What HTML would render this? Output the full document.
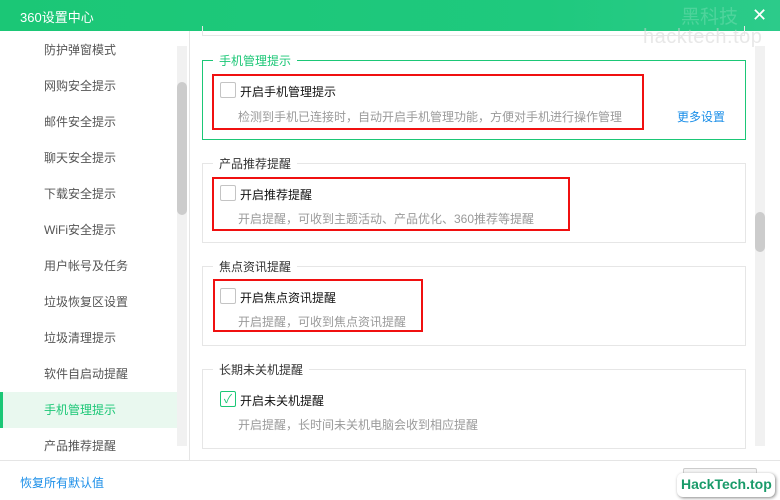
<!DOCTYPE html>
<html><head><meta charset="utf-8"><style>
*{margin:0;padding:0;box-sizing:border-box}
body{width:780px;height:500px;overflow:hidden;background:#fff;font-family:"Liberation Sans","Noto Sans CJK SC",sans-serif;font-size:12px;color:#333;position:relative}
.abs{position:absolute}
.title{left:0;top:0;width:780px;height:31px;background:linear-gradient(90deg,#1bc776,#1fc97e 70%,#2ccb8a)}
.title span{position:absolute;left:20px;top:7px;color:#fff;font-size:13px}
.nav{left:44px;font-size:12px;color:#555;line-height:16px}
.box{border:1px solid #e6e6e6}
.leg{background:#fff;padding:0 6px;font-size:12px;color:#333;line-height:14px}
.red{border:2px solid #f01010}
.cb{width:16px;height:16px;border:1px solid #c4c4c4;border-radius:2px;background:#fff}
.lbl{font-size:12px;color:#111}
.desc{font-size:12px;color:#9a9a9a}
</style></head><body>
<div class="abs title"><span>360设置中心</span>
<div class="abs" style="left:681px;top:2px;color:rgba(255,255,255,.18);font-size:19px">黑科技</div>
<div class="abs" style="left:752px;top:5px;color:#fff;font-size:18px">✕</div></div>
<div class="abs" style="left:643px;top:26px;color:rgba(210,210,210,.5);font-size:20px;letter-spacing:0.5px">hacktech.top</div>

<div class="abs nav" style="top:42px">防护弹窗模式</div>
<div class="abs nav" style="top:78px">网购安全提示</div>
<div class="abs nav" style="top:114px">邮件安全提示</div>
<div class="abs nav" style="top:150px">聊天安全提示</div>
<div class="abs nav" style="top:186px">下载安全提示</div>
<div class="abs nav" style="top:222px">WiFi安全提示</div>
<div class="abs nav" style="top:258px">用户帐号及任务</div>
<div class="abs nav" style="top:294px">垃圾恢复区设置</div>
<div class="abs nav" style="top:330px">垃圾清理提示</div>
<div class="abs nav" style="top:366px">软件自启动提醒</div>
<div class="abs" style="left:0;top:392px;width:177px;height:36px;background:#e9f8ef;border-left:3px solid #1bc776"></div>
<div class="abs nav" style="top:402px;color:#1bc776">手机管理提示</div>
<div class="abs nav" style="top:438px">产品推荐提醒</div>
<div class="abs" style="left:177px;top:46px;width:10px;height:400px;background:#f1f1f1"></div>
<div class="abs" style="left:177px;top:82px;width:10px;height:133px;background:#ccc;border-radius:5px"></div>
<div class="abs" style="left:189px;top:31px;width:1px;height:429px;background:#e5e5e5"></div>

<div class="abs box" style="left:202px;top:26px;width:543px;height:10px;border-top:none"></div>

<div class="abs" style="left:202px;top:60px;width:544px;height:80px;border:1px solid #1bc776"></div>
<div class="abs leg" style="left:213px;top:54px;color:#1bc776">手机管理提示</div>
<div class="abs red" style="left:212px;top:74px;width:432px;height:56px"></div>
<div class="abs cb" style="left:220px;top:82px"></div>
<div class="abs lbl" style="left:240px;top:83px">开启手机管理提示</div>
<div class="abs desc" style="left:238px;top:108px">检测到手机已连接时，自动开启手机管理功能，方便对手机进行操作管理</div>
<div class="abs" style="left:677px;top:108px;color:#1a8ee8">更多设置</div>

<div class="abs box" style="left:202px;top:163px;width:544px;height:80px"></div>
<div class="abs leg" style="left:213px;top:157px">产品推荐提醒</div>
<div class="abs red" style="left:212px;top:177px;width:358px;height:54px"></div>
<div class="abs cb" style="left:220px;top:185px"></div>
<div class="abs lbl" style="left:240px;top:186px">开启推荐提醒</div>
<div class="abs desc" style="left:238px;top:210px">开启提醒，可收到主题活动、产品优化、360推荐等提醒</div>

<div class="abs box" style="left:202px;top:266px;width:544px;height:80px"></div>
<div class="abs leg" style="left:213px;top:260px">焦点资讯提醒</div>
<div class="abs red" style="left:213px;top:279px;width:210px;height:53px"></div>
<div class="abs cb" style="left:220px;top:288px"></div>
<div class="abs lbl" style="left:240px;top:289px">开启焦点资讯提醒</div>
<div class="abs desc" style="left:238px;top:313px">开启提醒，可收到焦点资讯提醒</div>

<div class="abs box" style="left:202px;top:369px;width:544px;height:80px"></div>
<div class="abs leg" style="left:213px;top:363px">长期未关机提醒</div>
<div class="abs cb" style="left:220px;top:391px;border-color:#1bc776;color:#1bc776;font-size:12px;line-height:14px;text-align:center">✓</div>
<div class="abs lbl" style="left:240px;top:392px">开启未关机提醒</div>
<div class="abs desc" style="left:238px;top:416px">开启提醒，长时间未关机电脑会收到相应提醒</div>

<div class="abs" style="left:755px;top:46px;width:10px;height:400px;background:#f1f1f1"></div>
<div class="abs" style="left:755px;top:212px;width:10px;height:40px;background:#ccc;border-radius:5px"></div>

<div class="abs" style="left:0;top:460px;width:780px;height:1px;background:#e5e5e5"></div>
<div class="abs" style="left:20px;top:474px;color:#1a8ee8;font-size:12px">恢复所有默认值</div>
<div class="abs" style="left:683px;top:468px;width:74px;height:27px;border:1px solid #ccc;background:#f4f4f4;border-radius:2px"></div>
<div class="abs" style="left:677px;top:473px;width:98px;height:24px;background:#fff;border-radius:6px;box-shadow:1px 1px 3px #888"></div>
<div class="abs" style="left:681px;top:476px;color:#1a9b6a;font-weight:bold;font-size:14px">HackTech.top</div>
</body></html>
